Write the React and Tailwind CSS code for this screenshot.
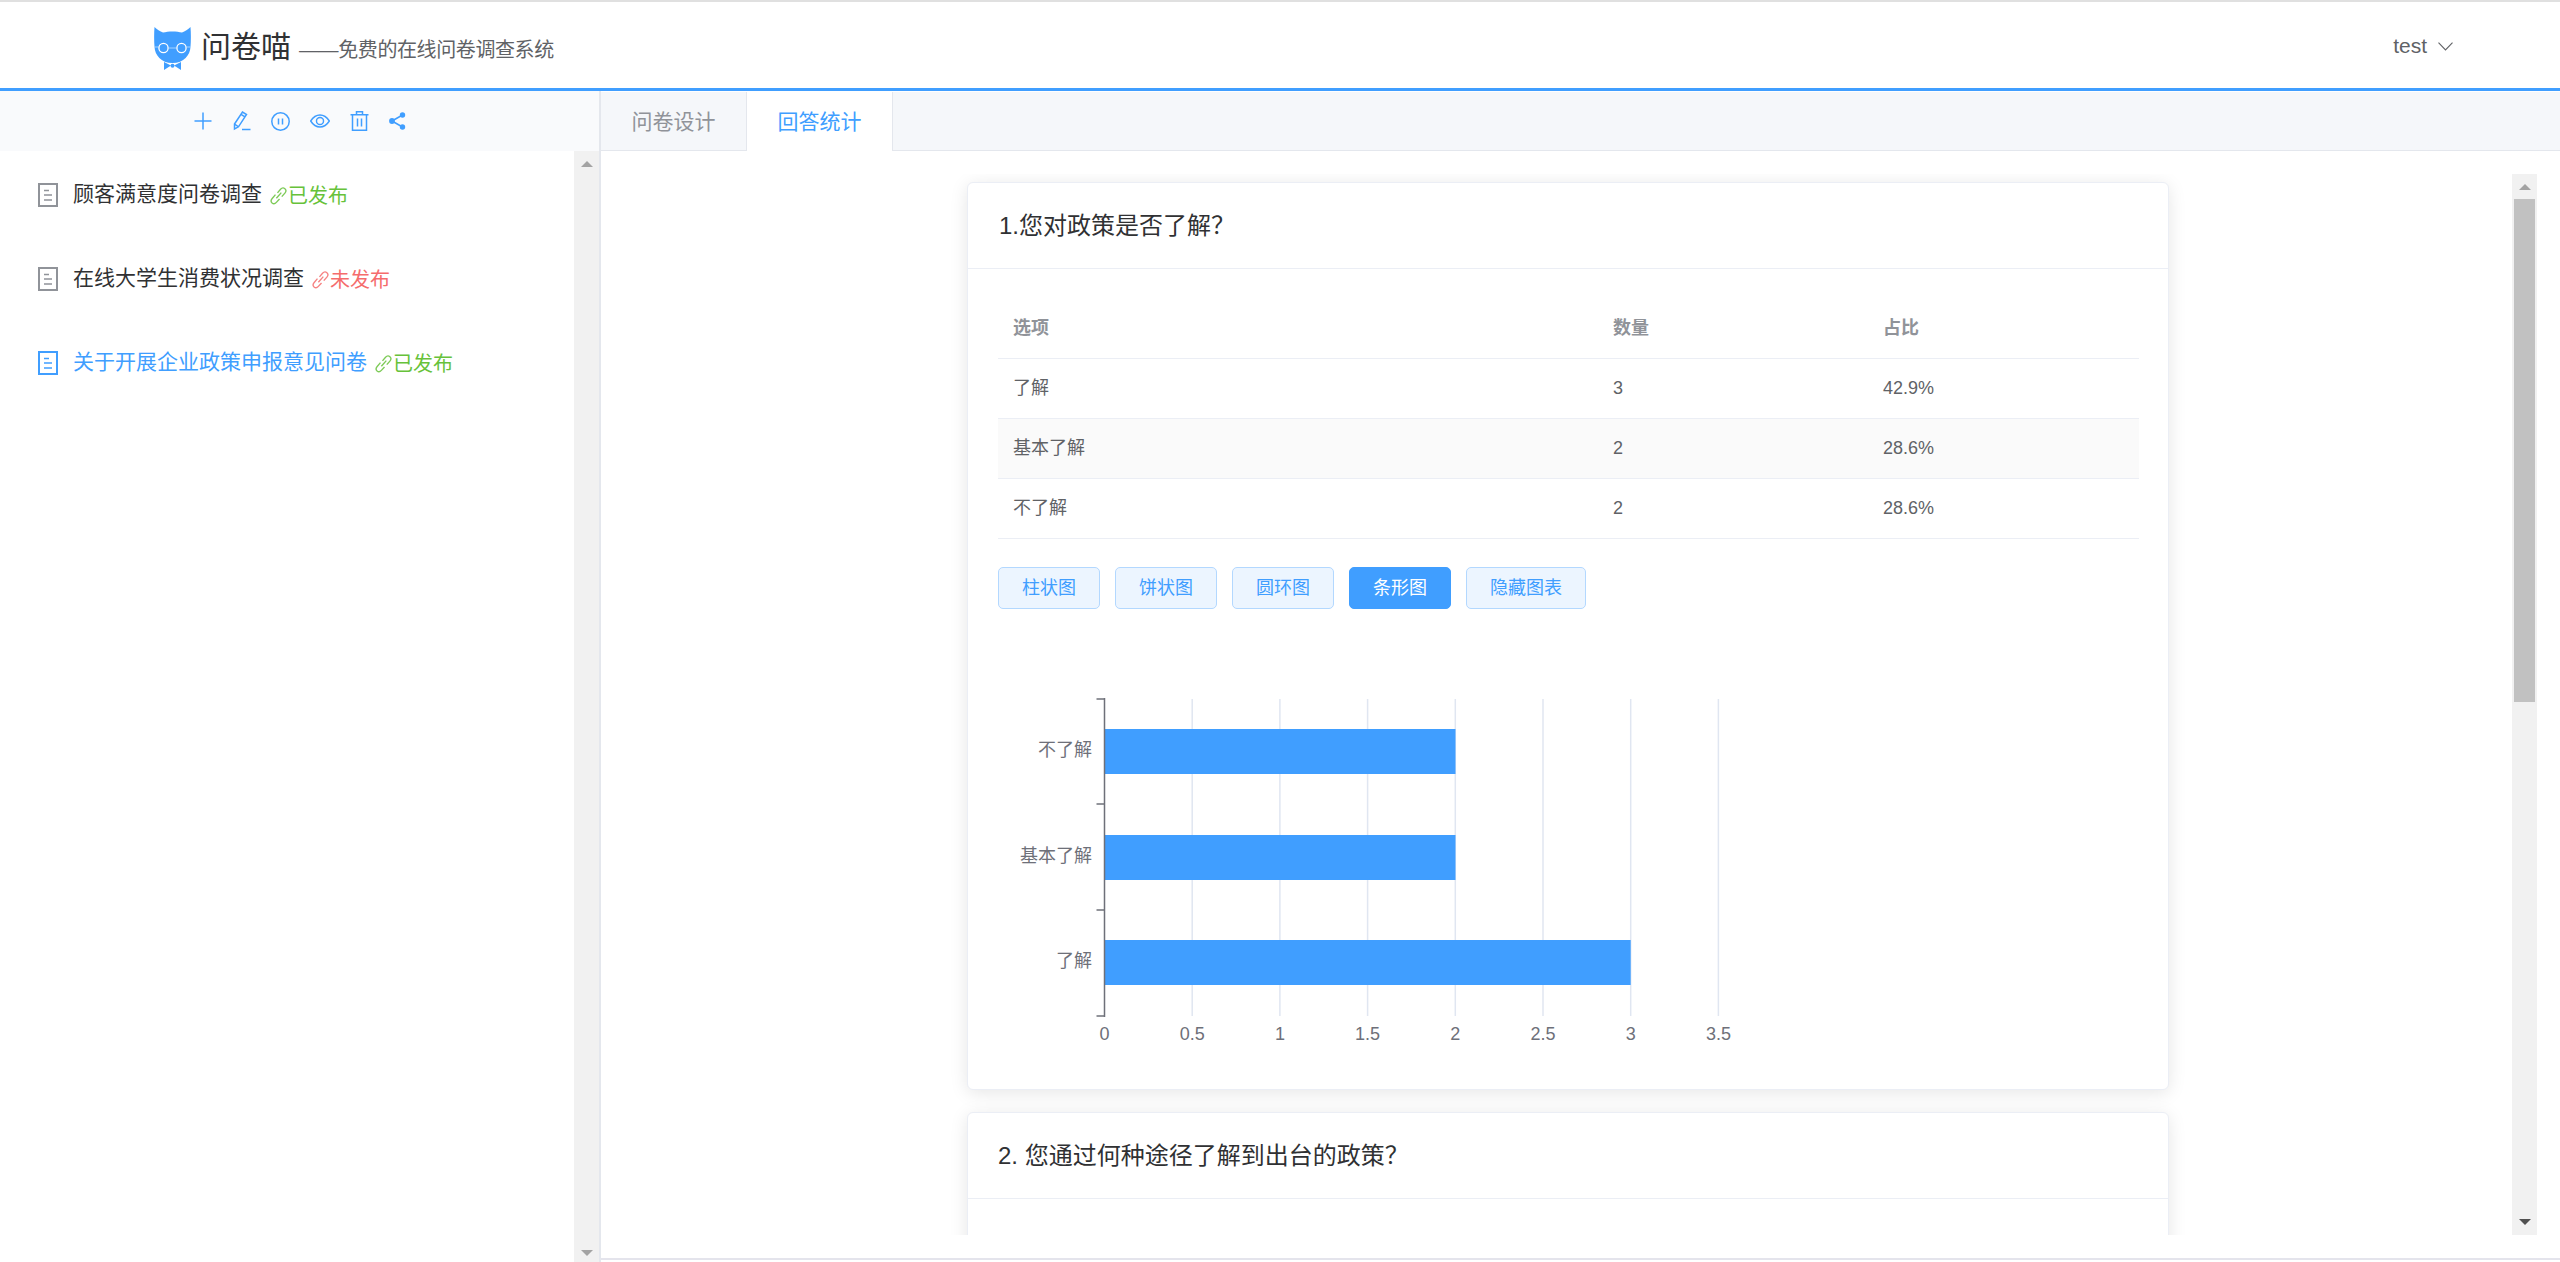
import React from "react";

const font = { fontFamily: '"Liberation Sans","Noto Sans CJK SC",sans-serif' };

function Logo() {
  return (
    <svg width="37" height="43" viewBox="0 0 37 43" className="shrink-0 mt-[6px]">
      <path d="M0.5 0 C3 2.5 6 4.5 9 5.5 C14 4 23 4 28 5.5 C31 4.5 34 2.5 36.5 0 C37 6 37 14 36.5 20 C36 28 30 36 18.5 36 C7 36 1 28 0.5 20 C0 14 0 6 0.5 0 Z" fill="#409eff" />
      <circle cx="9.5" cy="21" r="4.6" fill="none" stroke="#fff" strokeWidth="1.3" />
      <circle cx="27.5" cy="21" r="4.6" fill="none" stroke="#fff" strokeWidth="1.3" />
      <path d="M14.1 21h8.8M0.5 20h4.4M32.1 20h4.4" stroke="#cfe6ff" strokeWidth="0.7" />
      <path d="M10 35 L17 38.5 L10 43 Z M27 35 L20 38.5 L27 43 Z" fill="#409eff" />
      <circle cx="18.5" cy="38.8" r="2" fill="#409eff" />
    </svg>
  );
}

function ToolIcons() {
  const s = { fill: "none", stroke: "#409eff", strokeWidth: 1.5 };
  return (
    <div className="flex items-center gap-[20px]">
      <svg width="18" height="18" viewBox="0 0 18 18" className="mr-[1px]"><path d="M9 0.5v17M0.5 9h17" {...s} /></svg>
      <svg width="18" height="20" viewBox="0 0 18 20"><path d="M1.5 13 L9.5 1 L13.5 3.5 L5.5 15.8 L1.5 18 Z M8 3.3 L12 5.9 M1.5 13 L5.5 15.8 M9 18.6 H17.5" {...s} /></svg>
      <svg width="19" height="19" viewBox="0 0 19 19"><circle cx="9.5" cy="9.5" r="8.7" {...s} /><path d="M7.5 6.5v6M11.5 6.5v6" {...s} /></svg>
      <svg width="20" height="14" viewBox="0 0 21 14"><path d="M0.7 7 C3.5 2.6 7 0.7 10.5 0.7 C14 0.7 17.5 2.6 20.3 7 C17.5 11.4 14 13.3 10.5 13.3 C7 13.3 3.5 11.4 0.7 7 Z" {...s} /><circle cx="10.5" cy="7" r="3.7" {...s} /></svg>
      <svg width="19" height="20" viewBox="0 0 19 20"><path d="M0.5 3.7h18M6.5 3.5V0.8h6v2.7M2.5 3.7V19.2h14V3.7M7.5 7.5v8M11.5 7.5v8" {...s} /></svg>
      <svg width="17" height="18" viewBox="0 0 17 18"><path d="M3 9 L13.5 3 M3 9 L13.5 15" stroke="#409eff" strokeWidth="1.5" /><circle cx="3" cy="9" r="2.9" fill="#409eff" /><circle cx="13.5" cy="3" r="2.7" fill="#409eff" /><circle cx="13.5" cy="15" r="2.7" fill="#409eff" /></svg>
    </div>
  );
}

function DocIcon({ color }) {
  return (
    <svg width="20" height="24" viewBox="0 0 20 24" className="shrink-0">
      <rect x="1" y="1" width="18" height="22" fill="none" stroke={color} strokeWidth="2" />
      <path d="M6 7.5h5M6 12h8M6 17h8" stroke={color} strokeWidth="1.6" />
    </svg>
  );
}

function LinkIcon({ color }) {
  return (
    <svg width="17" height="18" viewBox="0 0 15 16" className="shrink-0" opacity="0.85">
      <path d="M5.6 10 L10 5 M4.8 6.8 L1.9 10.2 C0.6 11.7 0.8 13.3 1.8 14.2 C2.9 15.1 4.4 15 5.6 13.7 L8.4 10.6 M6.6 5.2 L9.3 2 C10.5 0.7 12.1 0.6 13.2 1.5 C14.3 2.5 14.4 4 13.2 5.4 L10.4 8.6" fill="none" stroke={color} strokeWidth="1.2" />
    </svg>
  );
}

function Triangle({ up, color }) {
  return (
    <svg width="12" height="6" viewBox="0 0 12 6" className="shrink-0">
      <path d={up ? "M6 0 L12 6 H0 Z" : "M0 0 H12 L6 6 Z"} fill={color} />
    </svg>
  );
}

function ListRow({ title, status, statusColor, iconColor, textColor }) {
  return (
    <div className="flex items-center h-[24px] mb-[60px]">
      <DocIcon color={iconColor} />
      <span className="ml-[15px] mb-[3px] text-[21px] leading-[24px] whitespace-nowrap" style={{ color: textColor }}>{title}</span>
      <span className="ml-[8px] mt-[1px] flex items-center">
        <LinkIcon color={statusColor} />
        <span className="ml-[1px] text-[20px] leading-[24px] whitespace-nowrap" style={{ color: statusColor }}>{status}</span>
      </span>
    </div>
  );
}

function Row({ a, b, c, stripe }) {
  return (
    <div className={`flex items-center h-[60px] border-b border-[#ebeef5] text-[18px] text-[#606266] ${stripe ? "bg-[#fafafa]" : ""}`}>
      <div className="w-[600px] pl-[15px]">{a}</div>
      <div className="w-[270px] pl-[15px]">{b}</div>
      <div className="flex-1 pl-[15px]">{c}</div>
    </div>
  );
}

function ChartButton({ label, active, wide }) {
  return (
    <button className={`${wide ? "w-[120px]" : "w-[102px]"} h-[42px] rounded-[5px] border text-[18px] ${active ? "bg-[#409eff] border-[#409eff] text-white" : "bg-[#ecf5ff] border-[#b3d8ff] text-[#409eff]"}`}>
      {label}
    </button>
  );
}

function BarChart() {
  const x0 = 106.5;
  const step = 87.7;
  const grid = [1, 2, 3, 4, 5, 6, 7];
  const xl = ["0", "0.5", "1", "1.5", "2", "2.5", "3", "3.5"];
  const ticks = [9, 114, 220, 326];
  const bars = [
    [39, 351],
    [145, 351],
    [250, 526.2],
  ];
  const labels = [
    ["不了解", 66],
    ["基本了解", 172],
    ["了解", 277],
  ];
  return (
    <svg width="1141" height="380" viewBox="0 0 1141 380" className="block" style={font}>
      {grid.map((g) => (
        <line key={g} x1={x0 + g * step} x2={x0 + g * step} y1="9" y2="326" stroke="#e0e6f1" strokeWidth="1.5" />
      ))}
      {bars.map(([y, w]) => (
        <rect key={y} x={x0} y={y} width={w} height="45" fill="#409eff" />
      ))}
      <line x1={x0} x2={x0} y1="8" y2="327" stroke="#6e7079" strokeWidth="1.5" />
      {ticks.map((t) => (
        <line key={t} x1={x0 - 8} x2={x0} y1={t} y2={t} stroke="#6e7079" strokeWidth="1.5" />
      ))}
      {labels.map(([t, y]) => (
        <text key={t} x="94" y={y} textAnchor="end" fontSize="18" fill="#6e7079">{t}</text>
      ))}
      {xl.map((t, i) => (
        <text key={t} x={x0 + i * step} y="350" textAnchor="middle" fontSize="18" fill="#6e7079">{t}</text>
      ))}
    </svg>
  );
}

export default function App() {
  return (
    <div className="w-[2560px] h-[1262px] overflow-hidden flex flex-col bg-white" style={font}>
      <header className="h-[91px] shrink-0 box-border border-t-2 border-t-[#e0e0e0] border-b-[3px] border-b-[#409eff] flex items-center pl-[154px] pr-[107px]">
        <Logo />
        <span className="ml-[10px] mt-[4px] text-[30px] leading-none text-[#303133]">问卷喵</span>
        <span className="ml-[8px] mt-[9px] text-[20px] tracking-[-0.4px] leading-none text-[#606266]">——免费的在线问卷调查系统</span>
        <div className="ml-auto mt-[2px] flex items-center gap-[11px]">
          <span className="text-[21px] text-[#606266]">test</span>
          <svg width="15" height="9" viewBox="0 0 15 9"><path d="M0.5 0.7 L7.5 8 L14.5 0.7" fill="none" stroke="#606266" strokeWidth="1.1" /></svg>
        </div>
      </header>

      <div className="flex-1 flex min-h-0">
        <aside className="w-[599px] shrink-0 flex flex-col">
          <div className="h-[60px] shrink-0 bg-[#f9fafc] flex items-center pl-[194px]">
            <ToolIcons />
          </div>
          <div className="flex-1 flex min-h-0">
            <div className="flex-1 pl-[38px] pt-[32px]">
              <ListRow title="顾客满意度问卷调查" status="已发布" statusColor="#67c23a" iconColor="#909399" textColor="#303133" />
              <ListRow title="在线大学生消费状况调查" status="未发布" statusColor="#f56c6c" iconColor="#909399" textColor="#303133" />
              <ListRow title="关于开展企业政策申报意见问卷" status="已发布" statusColor="#67c23a" iconColor="#409eff" textColor="#409eff" />
            </div>
            <div className="w-[25px] shrink-0 bg-[#f1f1f1] flex flex-col items-center justify-between pt-[10px] pb-[6px]">
              <Triangle up color="#a3a3a3" />
              <Triangle color="#a3a3a3" />
            </div>
          </div>
        </aside>

        <main className="flex-1 min-w-0 flex flex-col border-l-2 border-l-[#e4e7ed]">
          <div className="h-[60px] shrink-0 bg-[#f5f7fa] border-t border-t-white border-b border-b-[#e4e7ed] flex text-[21px]">
            <div className="w-[145px] h-[59px] flex items-center justify-center text-[#909399]">问卷设计</div>
            <div className="w-[147px] h-[59px] bg-white border-x border-[#e4e7ed] flex items-center justify-center text-[#409eff]">回答统计</div>
          </div>
          <div className="h-[1084px] shrink-0 pt-[23px] flex pr-[23px]">
            <div className="flex-1 min-w-0 overflow-hidden pl-[366px] pt-[8px]">
              <section className="w-[1202px] h-[908px] bg-white rounded-[6px] border border-[#ebeef5] shadow-[0_3px_18px_rgba(0,0,0,0.1)] flex flex-col">
                <div className="h-[86px] shrink-0 border-b border-[#ebeef5] flex items-center pl-[31px] text-[24px] text-[#303133]">1.您对政策是否了解？</div>
                <div className="pl-[30px] pr-[29px] pt-[30px]">
                  <div className="flex items-center h-[60px] border-b border-[#ebeef5] text-[18px] font-bold text-[#909399]">
                    <div className="w-[600px] pl-[15px]">选项</div>
                    <div className="w-[270px] pl-[15px]">数量</div>
                    <div className="flex-1 pl-[15px]">占比</div>
                  </div>
                  <Row a="了解" b="3" c="42.9%" />
                  <Row a="基本了解" b="2" c="28.6%" stripe />
                  <Row a="不了解" b="2" c="28.6%" />
                  <div className="flex gap-[15px] mt-[28px]">
                    <ChartButton label="柱状图" />
                    <ChartButton label="饼状图" />
                    <ChartButton label="圆环图" />
                    <ChartButton label="条形图" active />
                    <ChartButton label="隐藏图表" wide />
                  </div>
                  <div className="mt-[81px]">
                    <BarChart />
                  </div>
                </div>
              </section>
              <section className="mt-[22px] w-[1202px] h-[300px] bg-white rounded-[6px] border border-[#ebeef5] shadow-[0_3px_18px_rgba(0,0,0,0.1)]">
                <div className="h-[86px] border-b border-[#ebeef5] flex items-center pl-[30px] text-[24px] text-[#303133]">2. 您通过何种途径了解到出台的政策？</div>
              </section>
            </div>
            <div className="w-[25px] shrink-0 bg-[#f1f1f1] flex flex-col items-center relative pt-[10px] pb-[10px] justify-between">
              <Triangle up color="#a3a3a3" />
              <div className="absolute left-[2px] top-[25px] w-[21px] h-[503px] bg-[#c1c1c1]" />
              <Triangle color="#505050" />
            </div>
          </div>
          <div className="mt-[23px] h-[2px] shrink-0 bg-[#e4e4ec]" />
        </main>
      </div>
    </div>
  );
}
